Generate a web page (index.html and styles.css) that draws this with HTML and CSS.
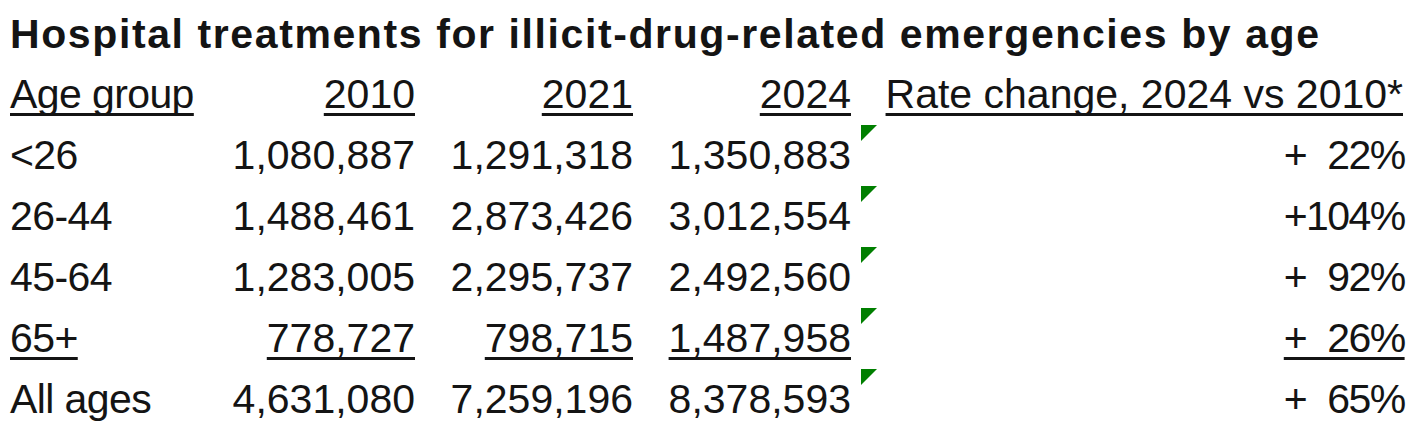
FILE: index.html
```html
<!DOCTYPE html>
<html lang="en">
<head>
<meta charset="utf-8">
<title>Hospital treatments</title>
<link rel="stylesheet" href="styles.css">
</head>
<body>
<div class="sheet">
  <div class="title">Hospital treatments for illicit-drug-related emergencies by age</div>
  <div class="grid">
    <div class="cell label"><span class="u">Age group</span></div>
    <div class="cell num"><span class="u">2010</span></div>
    <div class="cell num"><span class="u">2021</span></div>
    <div class="cell num"><span class="u">2024</span></div>
    <div class="cell rate"><span class="u">Rate change, 2024 vs 2010*</span></div>

    <div class="cell label">&lt;26</div>
    <div class="cell num">1,080,887</div>
    <div class="cell num">1,291,318</div>
    <div class="cell num">1,350,883</div>
    <div class="cell rate"><i class="flag"></i><span class="pct">+&#8199;22%</span></div>

    <div class="cell label">26-44</div>
    <div class="cell num">1,488,461</div>
    <div class="cell num">2,873,426</div>
    <div class="cell num">3,012,554</div>
    <div class="cell rate"><i class="flag"></i><span class="pct">+104%</span></div>

    <div class="cell label">45-64</div>
    <div class="cell num">1,283,005</div>
    <div class="cell num">2,295,737</div>
    <div class="cell num">2,492,560</div>
    <div class="cell rate"><i class="flag"></i><span class="pct">+&#8199;92%</span></div>

    <div class="cell label"><span class="u">65+</span></div>
    <div class="cell num"><span class="u">778,727</span></div>
    <div class="cell num"><span class="u">798,715</span></div>
    <div class="cell num"><span class="u">1,487,958</span></div>
    <div class="cell rate"><i class="flag"></i><span class="pct u">+&#8199;26%</span></div>

    <div class="cell label">All ages</div>
    <div class="cell num">4,631,080</div>
    <div class="cell num">7,259,196</div>
    <div class="cell num">8,378,593</div>
    <div class="cell rate"><i class="flag"></i><span class="pct">+&#8199;65%</span></div>
  </div>
</div>
</body>
</html>
```
FILE: styles.css
```css
html, body {
  margin: 0;
  padding: 0;
  background: #ffffff;
}
.sheet {
  padding: 0 11px 0 10px;
  color: #141414;
  font-family: "Liberation Sans", Arial, sans-serif;
}
.title {
  font-weight: bold;
  font-size: 41px;
  letter-spacing: 1.6px;
  line-height: 48px;
  padding: 10px 0 6px;
  white-space: nowrap;
}
.grid {
  display: grid;
  grid-template-columns: 191px 218px 218px 218px 1fr;
  grid-auto-rows: 61px;
  font-size: 41px;
  line-height: 61px;
}
.cell {
  white-space: nowrap;
}
.label {
  letter-spacing: -0.6px;
}
.num {
  text-align: right;
  padding-right: 4px;
}
.rate {
  position: relative;
  text-align: right;
}
.u {
  text-decoration: underline;
  text-decoration-thickness: 2.5px;
  text-underline-offset: 5px;
  text-decoration-skip-ink: none;
}
.pct {
  letter-spacing: -1.6px;
  margin-right: -1.6px;
}
.flag {
  position: absolute;
  left: 6px;
  top: 0;
  width: 0;
  height: 0;
  border-top: 16px solid #007f00;
  border-right: 16px solid transparent;
}
```
